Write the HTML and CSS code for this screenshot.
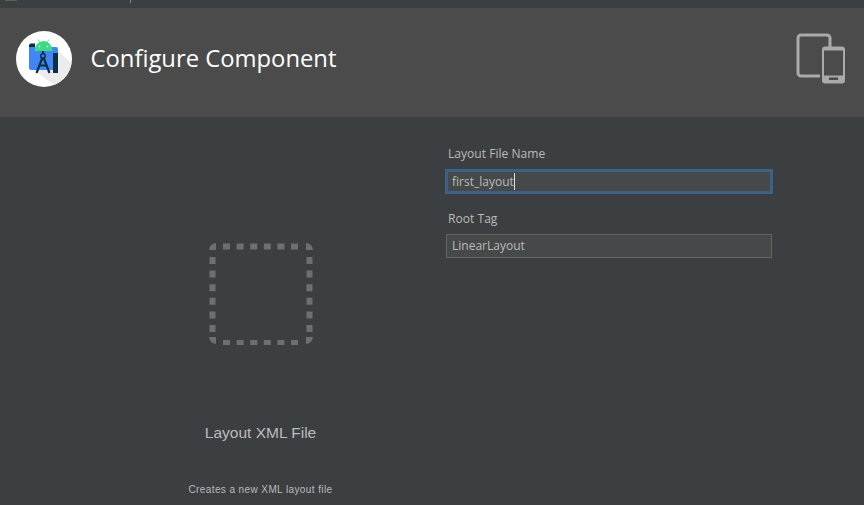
FILE: index.html
```html
<!DOCTYPE html>
<html lang="en">
<head>
<meta charset="utf-8">
<title>Configure Component</title>
<link rel="stylesheet" href="styles.css">
</head>
<body>
<div class="topbar"><span class="tb-green"></span><span class="tb-tick"></span></div>
<header class="header">
  <div class="logo">
    <svg width="56" height="56" viewBox="0 0 56 56">
      <circle cx="28" cy="28" r="28" fill="#fff"/>
      <path d="M42 20 L55.500 32 A28 28 0 0 1 38 54 L18 39 H42Z" fill="#ececec"/>
      <path d="M13 37 V16 H40 a2 2 0 0 1 2 2 V39 H15 a2 2 0 0 1-2-2Z" fill="#4285f4"/>
      <path d="M13 16 V14.500 a2 2 0 0 1 2-2 H19 V16Z" fill="#073042"/>
      <path d="M18.500 20 a9 10 0 0 1 18 0Z" fill="#3ddc84"/>
      <path d="M22 8.500 l2 3 M33 8.500 l-2 3" stroke="#3ddc84" stroke-width=".8" fill="none"/>
      <circle cx="23.500" cy="15.500" r=".8" fill="#fff"/><circle cx="31.500" cy="15.500" r=".8" fill="#fff"/>
      <path d="M27 20 v3 M26.500 26.500 L20.500 42 M27.500 26.500 L33.500 42 M23 34.500 h8" stroke="#073042" stroke-width="2.200" fill="none"/>
      <circle cx="27" cy="25" r="2.200" fill="none" stroke="#073042" stroke-width="1.500"/>
      <rect x="37" y="22" width="5" height="20" fill="#073042"/>
    </svg>
  </div>
  <h1 class="title">Configure Component</h1>
  <svg class="devices" width="50" height="52" viewBox="0 0 50 52">
    <path d="M34 15 V6 a3 3 0 0 0-3-3 H5 a3 3 0 0 0-3 3 V41 a3 3 0 0 0 3 3 H24" fill="none" stroke="#a9aaac" stroke-width="3"/>
    <path fill-rule="evenodd" d="M29 15 H46 a3 3 0 0 1 3 3 V49 a3 3 0 0 1-3 3 H29 a3 3 0 0 1-3-3 V18 a3 3 0 0 1 3-3Z M28 19 V44 H47 V19Z M33 46 V48.500 H42 V46Z" fill="#a9aaac" transform="translate(0 -.5)"/>
  </svg>
</header>
<main class="content">
  <section class="preview">
    <svg class="placeholder" width="104" height="104" viewBox="0 0 104 104">
      <path class="corner" d="M0 9 A8 8 0 0 1 7 2 V9Z M104 9 A8 8 0 0 0 97 2 V9Z M0 96 A8 8 0 0 0 7 103 V96Z M104 96 A8 8 0 0 1 97 103 V96Z"/>
      <path class="dash" d="M14 5.500 H92"/>
      <path class="dash" d="M14 102 H92"/>
      <path class="dash" d="M3.500 16 V94"/>
      <path class="dash" d="M100.500 16 V94"/>
    </svg>
    <div class="name">Layout XML File</div>
    <div class="desc">Creates a new XML layout file</div>
  </section>
  <form class="fields">
    <label class="label">Layout File Name</label>
    <div class="input focused">first_layout<span class="caret"></span></div>
    <label class="label second">Root Tag</label>
    <div class="input">LinearLayout</div>
  </form>
</main>
</body>
</html>
```
FILE: styles.css
```css
* { box-sizing: border-box; }
html, body { margin: 0; height: 100%; }
body {
  width: 864px;
  height: 505px;
  overflow: hidden;
  background: #3c3f41;
  color: #bbbbbb;
  font-family: "Open Sans", "Noto Sans", sans-serif;
  display: flex;
  flex-direction: column;
}
.topbar {
  height: 8px;
  background: #3c3f41;
  position: relative;
  flex: none;
}
.tb-green {
  position: absolute; left: 5px; top: 0; width: 12px; height: 1px; background: #4a6b4e;
}
.tb-tick {
  position: absolute; left: 130px; top: 0; width: 1px; height: 3px; background: #8a8a8a;
}
.header {
  height: 109px;
  flex: none;
  background: #4b4b4b;
  display: flex;
  align-items: flex-start;
  padding: 22px 18px 0 16px;
}
.logo { width: 56px; height: 56px; flex: none; margin-top: 1px; }
.logo svg { display: block; }
.title {
  margin: 0 0 0 18.500px;
  font-size: 23.800px;
  line-height: 57px;
  font-weight: 400;
  color: #ffffff;
  flex: 1;
}
.devices { flex: none; margin-top: 2px; }
.content {
  flex: 1;
  display: flex;
  min-height: 0;
}
.preview {
  width: 446px;
  flex: none;
  display: flex;
  flex-direction: column;
  align-items: center;
  padding: 124px 0 0 75px;
}
.placeholder { display: block; flex: none; }
.corner { fill: #6e6f70; }
.dash {
  fill: none;
  stroke: #6e6f70;
  stroke-width: 6px;
  stroke-dasharray: 7 6.600;
}
.name {
  margin-top: 78px;
  font-family: "Liberation Sans", Arial, sans-serif;
  font-size: 15.500px;
  line-height: 20px;
  color: #bbbbbb;
  white-space: nowrap;
}
.desc {
  margin-top: 40px;
  font-family: "Liberation Sans", Arial, sans-serif;
  font-size: 10px;
  line-height: 14px;
  letter-spacing: .4px;
  color: #bbbbbb;
  white-space: nowrap;
}
.fields {
  width: 326px;
  padding-top: 28px;
  display: flex;
  flex-direction: column;
}
.label {
  font-size: 12.100px;
  line-height: 18px;
  padding-left: 2px;
  color: #bbbbbb;
}
.label.second { margin-top: 16px; }
.input {
  margin-top: 6px;
  height: 24px;
  border: 1px solid #646464;
  background: #45494a;
  font-size: 12px;
  line-height: 21px;
  padding: 0 0 1px 5px;
  color: #bbbbbb;
  display: flex;
  align-items: center;
}
.input.focused {
  margin: 6px -1px 0;
  height: 25px;
  border: 3px solid #3d6185;
  padding: 0 0 0 4px;
}
.caret {
  width: 1px;
  height: 17px;
  background: #e0e0e0;
}
```
